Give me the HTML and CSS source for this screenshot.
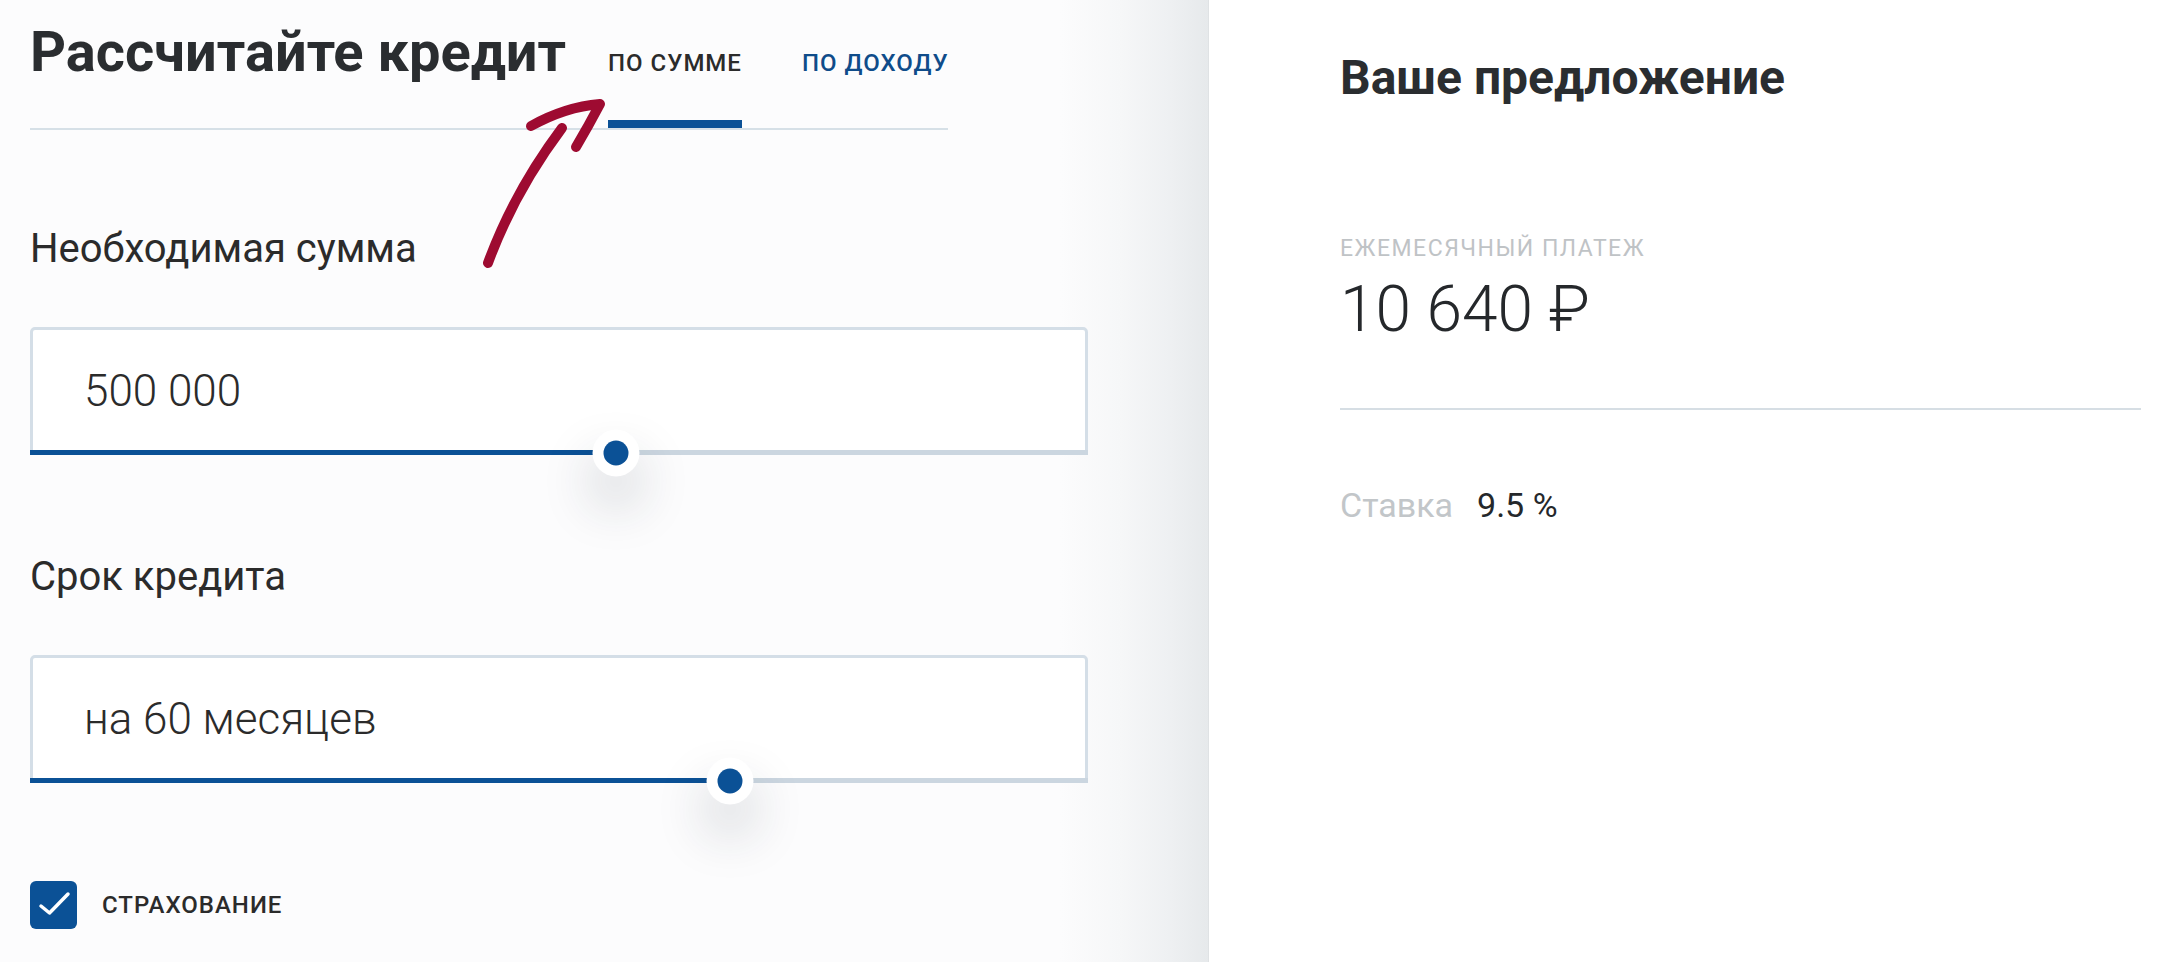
FILE: index.html
```html
<!DOCTYPE html>
<html lang="ru">
<head>
    <meta charset="UTF-8">
    <meta name="viewport" content="width=device-width, initial-scale=1.0">
    <title>Рассчитайте кредит</title>
    <link rel="stylesheet" href="styles.css">
</head>
<body>
    <div class="page">
        <section class="calc">
            <!-- hand-drawn hint pointing at the active tab -->
            <svg class="hint-arrow" width="160" height="200" viewBox="470 90 160 200">
                <path d="M488 263 Q514 192 562 128" />
                <path d="M531 126 Q565 107 600 104 Q589 125 576 147" />
            </svg>
            <div class="calc-head">
                <h1 class="calc-title">Рассчитайте кредит</h1>
                <nav class="tabs">
                    <a class="tab tab-active">По сумме</a>
                    <a class="tab">По доходу</a>
                </nav>
            </div>

            <div class="field-label">Необходимая сумма</div>
            <div class="field">
                <span class="field-value">500 000</span>
                <div class="slider">
                    <div class="slider-fill" style="width: 55.4%;"></div>
                    <div class="slider-thumb" style="left: 55.4%;"></div>
                </div>
            </div>

            <div class="field-label field-label-next">Срок кредита</div>
            <div class="field">
                <span class="field-value">на 60 месяцев</span>
                <div class="slider">
                    <div class="slider-fill" style="width: 66.2%;"></div>
                    <div class="slider-thumb" style="left: 66.2%;"></div>
                </div>
            </div>

            <label class="check">
                <span class="check-box">
                    <svg width="47" height="48" viewBox="0 0 47 48"><path d="M11 25 L19.5 32 L38 13" /></svg>
                </span>
                <span class="check-text">Страхование</span>
            </label>
        </section>

        <section class="offer">
            <h2 class="offer-title">Ваше предложение</h2>
            <div class="offer-caption">Ежемесячный платеж</div>
            <div class="offer-sum">10 640 ₽</div>
            <div class="offer-line"></div>
            <div class="offer-rate">
                <span class="rate-label">Ставка</span>
                <span class="rate-value">9.5 %</span>
            </div>
        </section>
    </div>
</body>
</html>
```

FILE: styles.css
```css
body {
    font-family: Roboto, 'Noto Sans', sans-serif;
    margin: 0;
    padding: 0;
    color: #2b2e31;
    background: #fff;
}
.page {
    display: flex;
    height: 962px;
    overflow: hidden;
}

/* left: calculator */
.calc {
    position: relative;
    flex-shrink: 0;
    width: 1209px;
    padding: 20px 0 0 30px;
    box-sizing: border-box;
    background: linear-gradient(90deg, #fcfcfd 0, #fcfcfd 1060px, #f6f7f8 1120px, #eef0f2 1170px, #e6e9eb 1209px);
    border-right: 1px solid #dfe2e4;
}
.hint-arrow {
    position: absolute;
    left: 470px;
    top: 90px;
    fill: none;
    stroke: #9e0b31;
    stroke-linecap: round;
    stroke-linejoin: round;
}
.hint-arrow path:first-child {
    stroke-width: 10;
}
.hint-arrow path:last-child {
    stroke-width: 10;
}
.calc-head {
    display: flex;
    align-items: baseline;
    width: 918px;
    border-bottom: 2px solid #d6e0e7;
    white-space: nowrap;
}
.calc-title {
    flex-shrink: 0;
    margin: 0;
    font-size: 56px;
    line-height: 64px;
    font-weight: 700;
    color: #2a2d30;
}
.tabs {
    display: flex;
    flex-shrink: 0;
    gap: 60px;
    margin-left: 42px;
}
.tab {
    display: block;
    padding-bottom: 43px;
    border-bottom: 8px solid transparent;
    font-size: 24px;
    line-height: 28px;
    font-weight: 500;
    text-transform: uppercase;
    letter-spacing: 1px;
    color: #0f4c8a;
    cursor: pointer;
}
.tab-active {
    color: #2b2b2b;
    border-bottom-color: #0b5196;
}

.field-label {
    margin-top: 96px;
    font-size: 40px;
    line-height: 46px;
    color: #2b2b2b;
}
.field-label-next {
    margin-top: 99px;
}
.field {
    position: relative;
    width: 1058px;
    height: 128px;
    margin-top: 55px;
    padding: 36px 51px 0;
    box-sizing: border-box;
    border: 3px solid #d4dee7;
    border-radius: 5px;
    background: #fff;
}
.field-value {
    font-size: 44px;
    line-height: 50px;
    font-weight: 300;
    color: #2b2b2b;
}
.slider {
    position: absolute;
    left: -3px;
    right: -3px;
    bottom: -3px;
    height: 5px;
    background: #cbd6e0;
}
.slider-fill {
    height: 100%;
    background: #0b5196;
}
.slider-thumb {
    position: absolute;
    top: 50%;
    width: 47px;
    height: 47px;
    border-radius: 50%;
    background: #fff;
    transform: translate(-50%, -50%);
    box-shadow: 0 28px 52px rgba(30, 45, 60, 0.22);
}
.slider-thumb::after {
    content: '';
    position: absolute;
    left: 11px;
    top: 11px;
    width: 25px;
    height: 25px;
    border-radius: 50%;
    background: #0b5196;
}

.check {
    display: flex;
    align-items: center;
    gap: 25px;
    margin-top: 98px;
}
.check-box {
    display: block;
    width: 47px;
    height: 48px;
    border-radius: 6px;
    background: #0b5196;
}
.check-box svg {
    display: block;
    fill: none;
    stroke: #fff;
    stroke-width: 3.5;
    stroke-linecap: round;
    stroke-linejoin: round;
}
.check-text {
    font-size: 24px;
    font-weight: 500;
    letter-spacing: 1px;
    text-transform: uppercase;
    color: #2b2b2b;
}

/* right: offer */
.offer {
    flex: 1;
    padding: 50px 23px 0 131px;
    background: #fff;
}
.offer-title {
    margin: 0;
    font-size: 48px;
    line-height: 56px;
    font-weight: 700;
    color: #2a2d30;
}
.offer-caption {
    margin-top: 130px;
    font-size: 23px;
    line-height: 26px;
    text-transform: uppercase;
    letter-spacing: 1.5px;
    color: #bfc3c6;
}
.offer-sum {
    margin-top: 10px;
    font-size: 64px;
    line-height: 76px;
    font-weight: 300;
    color: #25282b;
}
.offer-line {
    margin-top: 60px;
    height: 2px;
    background: #d6dee4;
}
.offer-rate {
    display: flex;
    gap: 24px;
    margin-top: 75px;
    font-size: 34px;
    line-height: 40px;
}
.rate-label {
    color: #c2c6c9;
}
.rate-value {
    color: #25282b;
}
```
